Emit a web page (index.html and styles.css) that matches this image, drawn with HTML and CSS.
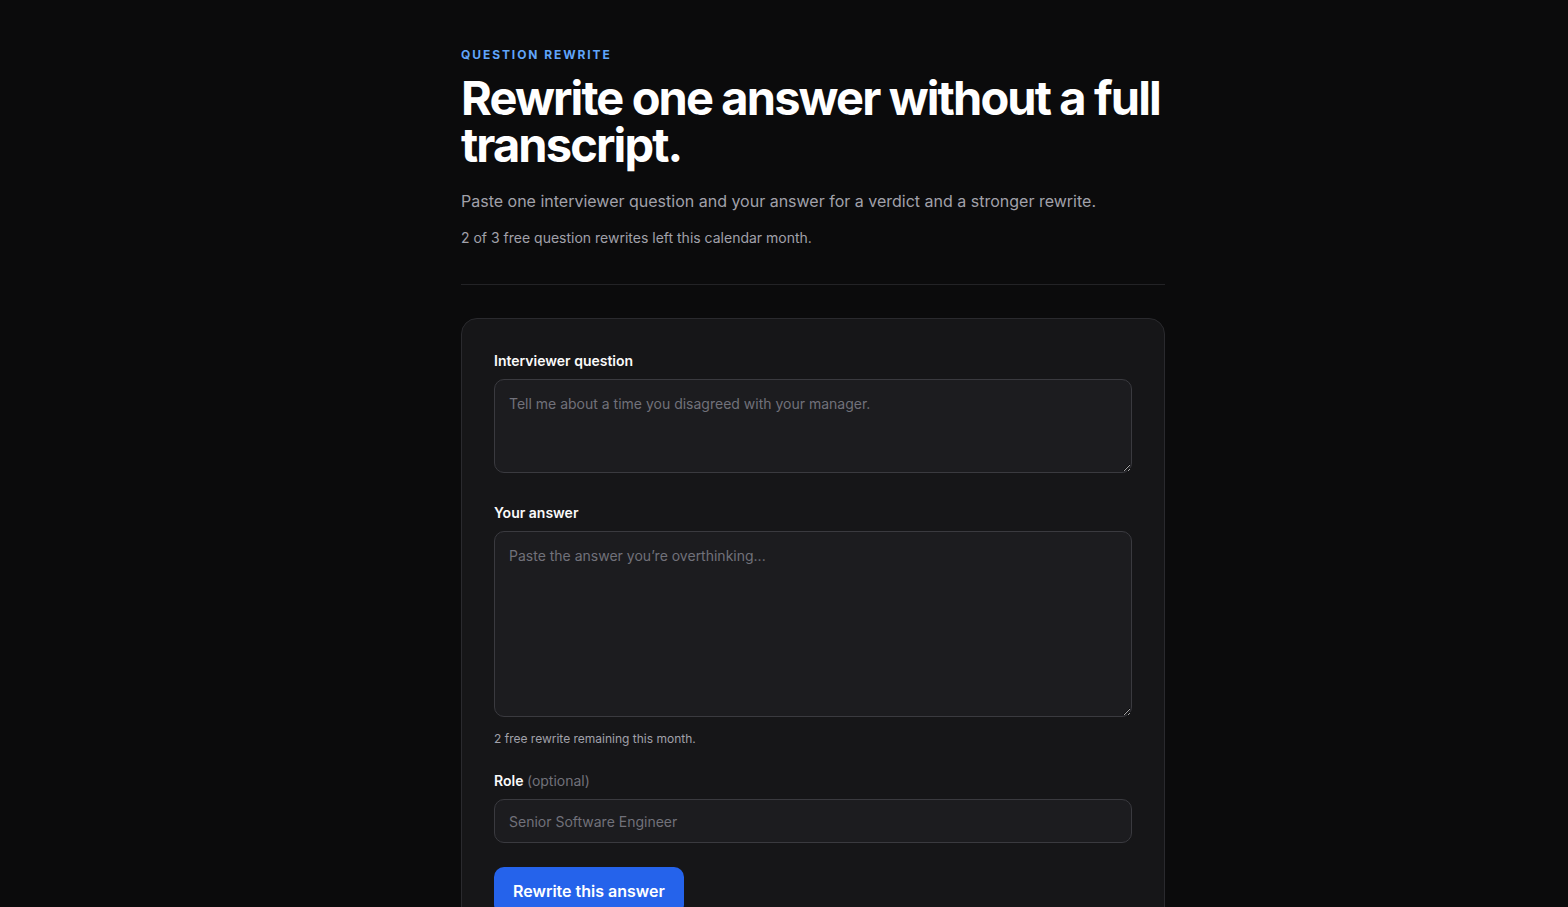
FILE: index.html
```html
<!DOCTYPE html>
<html lang="en">
<head>
<meta charset="utf-8">
<title>Question rewrite</title>
<link rel="stylesheet" href="styles.css">
</head>
<body>
<main class="page">
  <header class="intro">
    <p class="eyebrow">Question rewrite</p>
    <h1 class="title">Rewrite one answer without a full transcript.</h1>
    <p class="lead">Paste one interviewer question and your answer for a verdict and a stronger rewrite.</p>
    <p class="quota">2 of 3 free question rewrites left this calendar month.</p>
  </header>
  <hr class="divider">
  <form class="card">
    <div class="field field-first">
      <label class="label" for="q">Interviewer question</label>
      <textarea id="q" class="textarea short" placeholder="Tell me about a time you disagreed with your manager."></textarea>
    </div>
    <div class="field">
      <label class="label" for="a">Your answer</label>
      <textarea id="a" class="textarea tall" placeholder="Paste the answer you’re overthinking..."></textarea>
      <p class="hint">2 free rewrite remaining this month.</p>
    </div>
    <div class="field">
      <label class="label" for="r">Role <span class="optional">(optional)</span></label>
      <input id="r" class="input" type="text" placeholder="Senior Software Engineer">
    </div>
    <button type="button" class="button">Rewrite this answer</button>
  </form>
</main>
</body>
</html>
```
FILE: styles.css
```css
* { box-sizing: border-box; }
html, body { margin: 0; padding: 0; }
body {
  background: #0b0b0c;
  color: #fafafa;
  font-family: Inter, "Noto Sans", "Liberation Sans", sans-serif;
  padding-left: 58px;
  overflow: hidden;
}
.page {
  width: 704px;
  margin: 0 auto;
  padding-top: 47px;
}
.eyebrow {
  margin: 0;
  color: #60a5fa;
  font-size: 12px;
  font-weight: 700;
  letter-spacing: 0.16em;
  text-transform: uppercase;
  line-height: 16px;
}
.title {
  margin: 11px 0 0;
  font-size: 47px;
  font-weight: 700;
  letter-spacing: -0.04em;
  line-height: 47px;
  color: #ffffff;
}
.lead {
  margin: 21px 0 0;
  font-size: 16px;
  line-height: 24px;
  color: #a1a1aa;
}
.quota {
  margin: 15px 0 0;
  font-size: 14px;
  line-height: 20px;
  color: #a1a1aa;
}
.divider {
  margin: 36px 0 0;
  border: 0;
  border-top: 1px solid #232326;
}
.card {
  margin-top: 33px;
  background: #161618;
  border: 1px solid #2a2a2e;
  border-radius: 16px;
  padding: 32px 32px 40px;
  display: flex;
  flex-direction: column;
  gap: 24px;
}
.field { display: flex; flex-direction: column; }
.field-first { margin-bottom: 6px; }
.label {
  font-size: 14px;
  font-weight: 600;
  line-height: 20px;
  color: #fafafa;
  margin-bottom: 8px;
}
.optional { font-weight: 400; color: #71717a; }
.textarea, .input {
  width: 100%;
  background: #1c1c1f;
  border: 1px solid #3a3a3f;
  border-radius: 10px;
  color: #e4e4e7;
  font-family: inherit;
  font-size: 14px;
  line-height: 20px;
  padding: 14px 14px;
  outline: none;
}
.textarea { resize: vertical; display: block; }
.textarea.short { height: 94px; }
.textarea.tall { height: 186px; }
.input { height: 44px; padding: 10px 14px; }
::placeholder { color: #71717a; opacity: 1; }
.hint {
  margin: 14px 0 0;
  font-size: 12px;
  line-height: 16px;
  color: #a1a1aa;
}
.button {
  align-self: flex-start;
  background: #2563eb;
  color: #ffffff;
  border: 0;
  border-radius: 10px;
  font-family: inherit;
  font-size: 16px;
  font-weight: 600;
  height: 48px;
  padding: 0 19px;
}
```
